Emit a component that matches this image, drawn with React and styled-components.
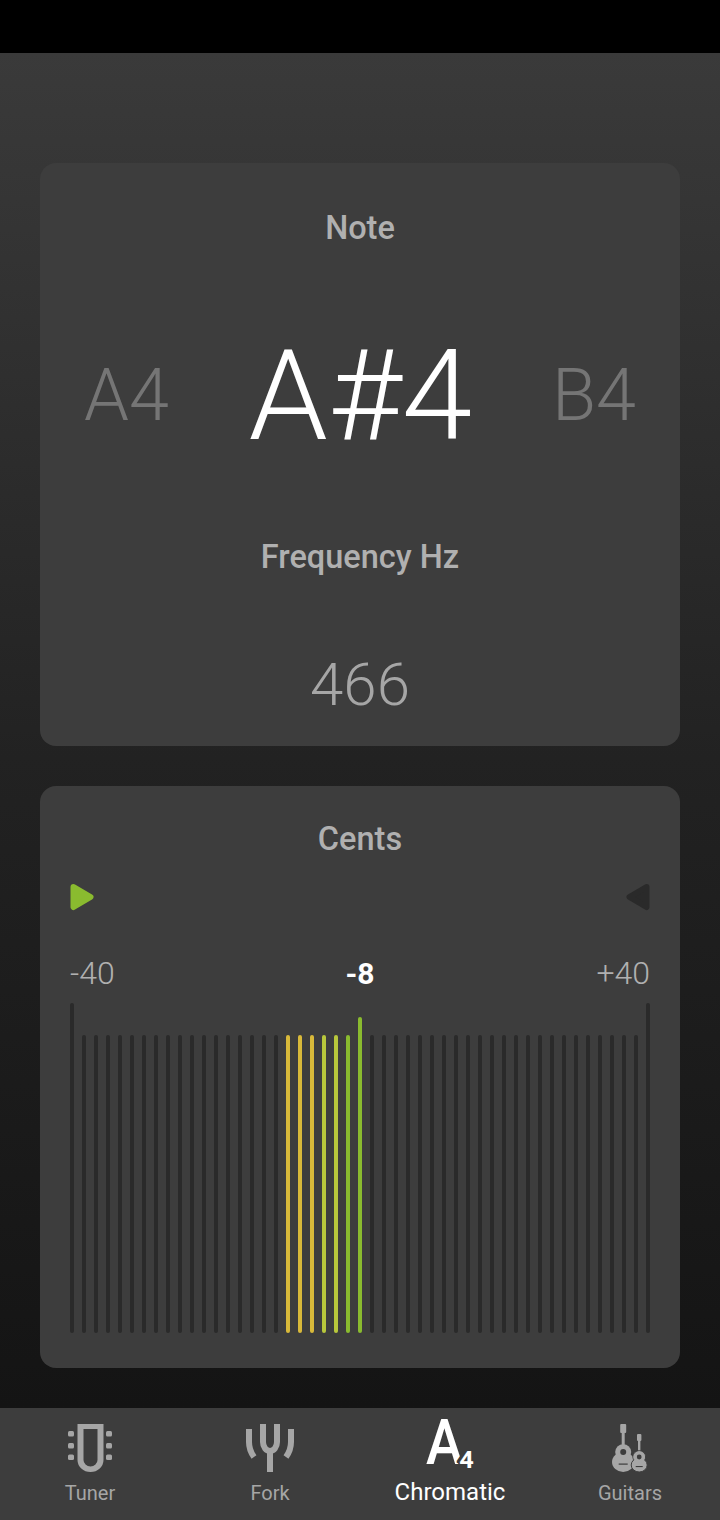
import React from "react";
import styled, { createGlobalStyle } from "styled-components";

const GlobalStyle = createGlobalStyle`
  *, *::before, *::after {
    box-sizing: border-box;
  }
  html, body {
    margin: 0;
    padding: 0;
    background: #000;
  }
  body {
    font-family: Roboto, "Liberation Sans", sans-serif;
  }
`;

// 49 bars, index 24 is the centre
function barColor(i) {
  if (i >= 18 && i <= 20) return "#d8b93a";
  if (i === 21 || i === 22) return "#b8c73c";
  if (i === 23 || i === 24) return "#8abb2f";
  return "#2a2a2a";
}

function barHeight(i) {
  if (i === 0 || i === 48) return 330;
  if (i === 24) return 316;
  return 298;
}

const bars = Array.from({ length: 49 }, (_, i) => i);

export default function App() {
  return (
    <Screen>
      <GlobalStyle />
      <StatusBar />
      <Main>
        <NoteCard>
          <Title>Note</Title>
          <NoteRow>
            <SideNote>A4</SideNote>
            <CurrentNote>A#4</CurrentNote>
            <SideNote>B4</SideNote>
          </NoteRow>
          <Title>Frequency Hz</Title>
          <Frequency>466</Frequency>
        </NoteCard>

        <CentsCard>
          <Title>Cents</Title>
          <Arrows>
            <Arrow viewBox="0 0 24 28" fill="#8abb2f" stroke="#8abb2f">
              <path d="M3.5 4 L20.5 14 L3.5 24 Z" />
            </Arrow>
            <Arrow viewBox="0 0 24 28" fill="#2a2a2a" stroke="#2a2a2a">
              <path d="M20.5 4 L3.5 14 L20.5 24 Z" />
            </Arrow>
          </Arrows>
          <Scale>
            <ScaleEnd>-40</ScaleEnd>
            <ScaleValue>-8</ScaleValue>
            <ScaleEnd $right>+40</ScaleEnd>
          </Scale>
          <Bars>
            {bars.map((i) => (
              <Bar key={i} $color={barColor(i)} $height={barHeight(i)} />
            ))}
          </Bars>
        </CentsCard>
      </Main>

      <Nav>
        <NavItem>
          <NavIcon viewBox="0 0 48 48" fill="#a6a6a6">
            <path
              d="M11.5 0 H37.5 V36 A13 12 0 0 1 11.5 36 Z M17.5 5 V36 A7 6.5 0 0 0 31.5 36 V5 Z"
              fillRule="evenodd"
            />
            <rect x="2" y="7" width="6" height="5.5" rx="1.5" />
            <rect x="2" y="19" width="6" height="5.5" rx="1.5" />
            <rect x="2" y="30.5" width="6" height="5.5" rx="1.5" />
            <rect x="40" y="7" width="6" height="5.5" rx="1.5" />
            <rect x="40" y="19" width="6" height="5.5" rx="1.5" />
            <rect x="40" y="30.5" width="6" height="5.5" rx="1.5" />
          </NavIcon>
          <NavLabel>Tuner</NavLabel>
        </NavItem>

        <NavItem>
          <NavIcon viewBox="0 0 48 48" fill="none" stroke="#a6a6a6" strokeWidth="6">
            <path d="M17 0 V18 A7 9 0 0 0 31 18 V0" />
            <path d="M24 25 V48" />
            <path d="M3 5 V18 Q3 26 8 33" />
            <path d="M45 5 V18 Q45 26 40 33" />
          </NavIcon>
          <NavLabel>Fork</NavLabel>
        </NavItem>

        <NavItem>
          <ChromaticIcon>
            <ChromaticLetter>A</ChromaticLetter>
            <ChromaticOctave>4</ChromaticOctave>
          </ChromaticIcon>
          <NavLabel $active>Chromatic</NavLabel>
        </NavItem>

        <NavItem>
          <NavIcon viewBox="0 0 48 48" fill="#a6a6a6">
            {/* big guitar */}
            <rect x="14.2" y="0" width="6" height="9" rx="1" />
            <rect x="15.7" y="8" width="3" height="14" />
            <ellipse cx="17.2" cy="28" rx="8" ry="7.8" />
            <ellipse cx="17.2" cy="38" rx="11.2" ry="10" />
            <circle cx="17.2" cy="28" r="3" fill="#3d3d3d" />
            <rect x="12.7" y="39.5" width="9" height="1.2" fill="#3d3d3d" />
            {/* small guitar */}
            <rect x="31" y="10" width="4.4" height="7" rx="1" />
            <rect x="32" y="16" width="2.4" height="12" />
            <ellipse cx="33.2" cy="33" rx="6.3" ry="6.3" stroke="#3d3d3d" strokeWidth="1" />
            <ellipse cx="33.2" cy="41" rx="8" ry="7" stroke="#3d3d3d" strokeWidth="1" />
            <ellipse cx="33.2" cy="33" rx="5.8" ry="5.8" />
            <circle cx="33.2" cy="33" r="2.4" fill="#3d3d3d" />
            <rect x="29.7" y="42" width="7" height="1.1" fill="#3d3d3d" />
          </NavIcon>
          <NavLabel>Guitars</NavLabel>
        </NavItem>
      </Nav>
    </Screen>
  );
}

const Screen = styled.div`
  display: flex;
  flex-direction: column;
  width: 720px;
  height: 1520px;
  overflow: hidden;
`;

const StatusBar = styled.div`
  height: 53px;
  flex: none;
  background: #000;
`;

const Main = styled.main`
  flex: 1;
  display: flex;
  flex-direction: column;
  gap: 40px;
  padding: 110px 40px 40px;
  background: linear-gradient(180deg, #3a3a3a 0%, #222 52%, #141414 100%);
`;

const Card = styled.section`
  display: flex;
  flex-direction: column;
  background: #3d3d3d;
  border-radius: 16px;
`;

const NoteCard = styled(Card)`
  height: 583px;
  padding-top: 47px;
  align-items: center;
`;

const CentsCard = styled(Card)`
  height: 582px;
  padding-top: 35px;
  align-items: stretch;
`;

const Title = styled.h2`
  margin: 0;
  font-size: 32.5px;
  line-height: 36px;
  font-weight: 500;
  text-align: center;
  color: #b0b0b0;
`;

const NoteRow = styled.div`
  align-self: stretch;
  display: flex;
  justify-content: space-between;
  align-items: center;
  height: 160px;
  margin: 69px 0 64px;
  padding: 0 44px 0 44px;
`;

const SideNote = styled.span`
  font-size: 72px;
  font-weight: 300;
  color: #757575;
`;

const CurrentNote = styled.span`
  font-size: 127px;
  font-weight: 300;
  color: #fff;
`;

const Frequency = styled.div`
  margin-top: 75px;
  font-size: 60px;
  line-height: 70px;
  font-weight: 300;
  color: #a6a6a6;
`;

const Arrows = styled.div`
  display: flex;
  justify-content: space-between;
  margin-top: 26px;
  padding: 0 30px;
`;

const Arrow = styled.svg`
  width: 24px;
  height: 28px;
  stroke-width: 6;
  stroke-linejoin: round;
`;

const Scale = styled.div`
  display: grid;
  grid-template-columns: 1fr auto 1fr;
  align-items: center;
  margin-top: 42px;
  height: 40px;
  padding: 0 30px;
`;

const ScaleEnd = styled.span`
  font-size: 32px;
  font-weight: 300;
  color: #b0b0b0;
  text-align: ${(p) => (p.$right ? "right" : "left")};
`;

const ScaleValue = styled.span`
  font-size: 30px;
  font-weight: 700;
  color: #fff;
`;

const Bars = styled.div`
  display: flex;
  justify-content: space-between;
  align-items: flex-end;
  height: 330px;
  margin-top: 10px;
  padding: 0 30px;
`;

const Bar = styled.div`
  width: 4px;
  height: ${(p) => p.$height}px;
  border-radius: 2px;
  background: ${(p) => p.$color};
`;

const Nav = styled.nav`
  flex: none;
  display: grid;
  grid-template-columns: repeat(4, 1fr);
  height: 112px;
  background: #3d3d3d;
`;

const NavItem = styled.div`
  display: flex;
  flex-direction: column;
  align-items: center;
  padding-top: 16px;
`;

const NavIcon = styled.svg`
  display: block;
  width: 48px;
  height: 48px;
`;

const NavLabel = styled.span`
  margin-top: ${(p) => (p.$active ? "1px" : "9px")};
  font-size: ${(p) => (p.$active ? "24px" : "20px")};
  line-height: ${(p) => (p.$active ? "28px" : "24px")};
  color: ${(p) => (p.$active ? "#fff" : "#a6a6a6")};
`;

const ChromaticIcon = styled.div`
  position: relative;
  width: 48px;
  height: 53px;
  color: #fff;
`;

const ChromaticLetter = styled.span`
  display: block;
  width: 48px;
  font-size: 63px;
  line-height: 37px;
  font-weight: 500;
  transform: scaleX(0.88);
  transform-origin: left center;
`;

// the octave digit sits over the foot of the A, with a halo cutting into it
const ChromaticOctave = styled.span`
  position: absolute;
  right: 1px;
  top: 24px;
  font-size: 23px;
  line-height: 26px;
  font-weight: 700;
  transform: scaleX(1.1);
  text-shadow: -2px -2px 0 #3d3d3d, -2px 0 0 #3d3d3d, 0 -2px 0 #3d3d3d,
    -3px -1px 0 #3d3d3d, -1px -3px 0 #3d3d3d;
`;
